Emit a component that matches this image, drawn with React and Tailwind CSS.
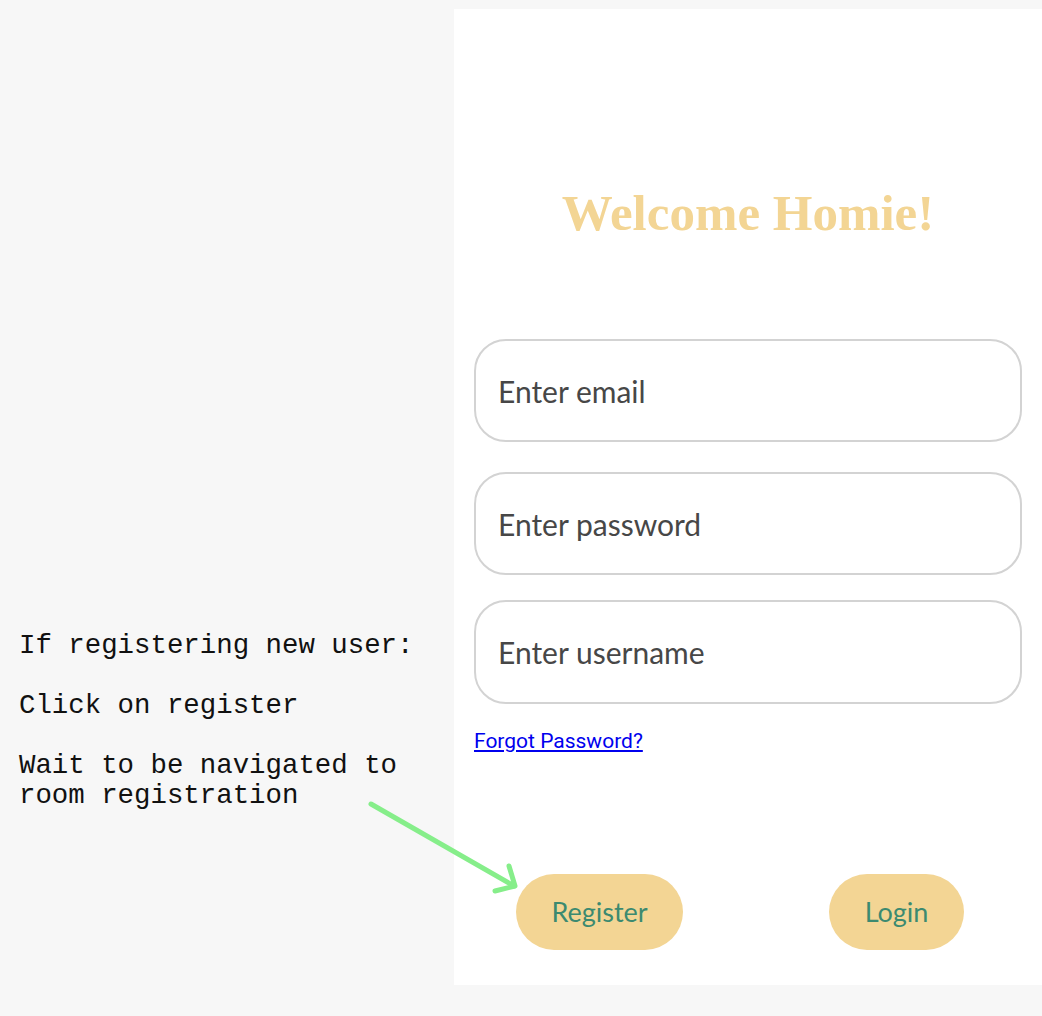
export default function App() {
  return (
    <div className="relative w-[1042px] h-[1016px] bg-[#f7f7f7] overflow-hidden">
      <div className="flex h-full">
        <div className="w-[454px] shrink-0 pt-[631px] pl-[19px]">
          <div
            className="text-[27.4px] leading-[30px] text-[#111] whitespace-pre"
            style={{ fontFamily: '"Liberation Mono", monospace' }}
          >
            <div>If registering new user:</div>
            <div className="h-[30px]" />
            <div>Click on register</div>
            <div className="h-[30px]" />
            <div>Wait to be navigated to</div>
            <div>room registration</div>
          </div>
        </div>
        <div className="mt-[9px] w-[588px] h-[976px] bg-white flex flex-col px-[20px]">
          <h1
            className="mt-[172px] text-center text-[51px] leading-[64px] font-semibold text-[#f3d594]"
            style={{ fontFamily: '"Liberation Serif", serif' }}
          >
            Welcome Homie!
          </h1>
          <div
            className="mt-[94px] flex flex-col"
            style={{ fontFamily: 'Lato, sans-serif' }}
          >
            <input
              placeholder="Enter email"
              className="w-[548px] h-[103px] rounded-[32px] border-2 border-[#d3d3d3] px-[22px] text-[30px] text-[#474747] placeholder:text-[#474747] outline-none"
            />
            <input
              placeholder="Enter password"
              className="mt-[30px] w-[548px] h-[103px] rounded-[32px] border-2 border-[#d3d3d3] px-[22px] text-[30px] text-[#474747] placeholder:text-[#474747] outline-none"
            />
            <input
              placeholder="Enter username"
              className="mt-[25px] w-[548px] h-[104px] rounded-[32px] border-2 border-[#d3d3d3] px-[22px] text-[30px] text-[#474747] placeholder:text-[#474747] outline-none"
            />
          </div>
          <a
            href="#"
            className="mt-[24px] self-start text-[21px] leading-[26px] text-[#0000ee] underline"
            style={{ fontFamily: 'Roboto, sans-serif' }}
          >
            Forgot Password?
          </a>
          <div
            className="mt-[120px] flex"
            style={{ fontFamily: 'Lato, sans-serif' }}
          >
            <button className="ml-[42px] w-[167px] h-[76px] rounded-full bg-[#f3d594] text-[27px] text-[#3c8a70]">
              Register
            </button>
            <button className="ml-[146px] w-[135px] h-[76px] rounded-full bg-[#f3d594] text-[27px] text-[#3c8a70]">
              Login
            </button>
          </div>
        </div>
      </div>
      <svg
        className="absolute left-0 top-0 pointer-events-none"
        width="1042"
        height="1016"
      >
        <g stroke="#86ee8a" strokeWidth="5" strokeLinecap="round" fill="none">
          <line x1="371" y1="804" x2="514" y2="886" />
          <polyline points="509,866 515,886 495,891" strokeLinejoin="round" />
        </g>
      </svg>
    </div>
  );
}
